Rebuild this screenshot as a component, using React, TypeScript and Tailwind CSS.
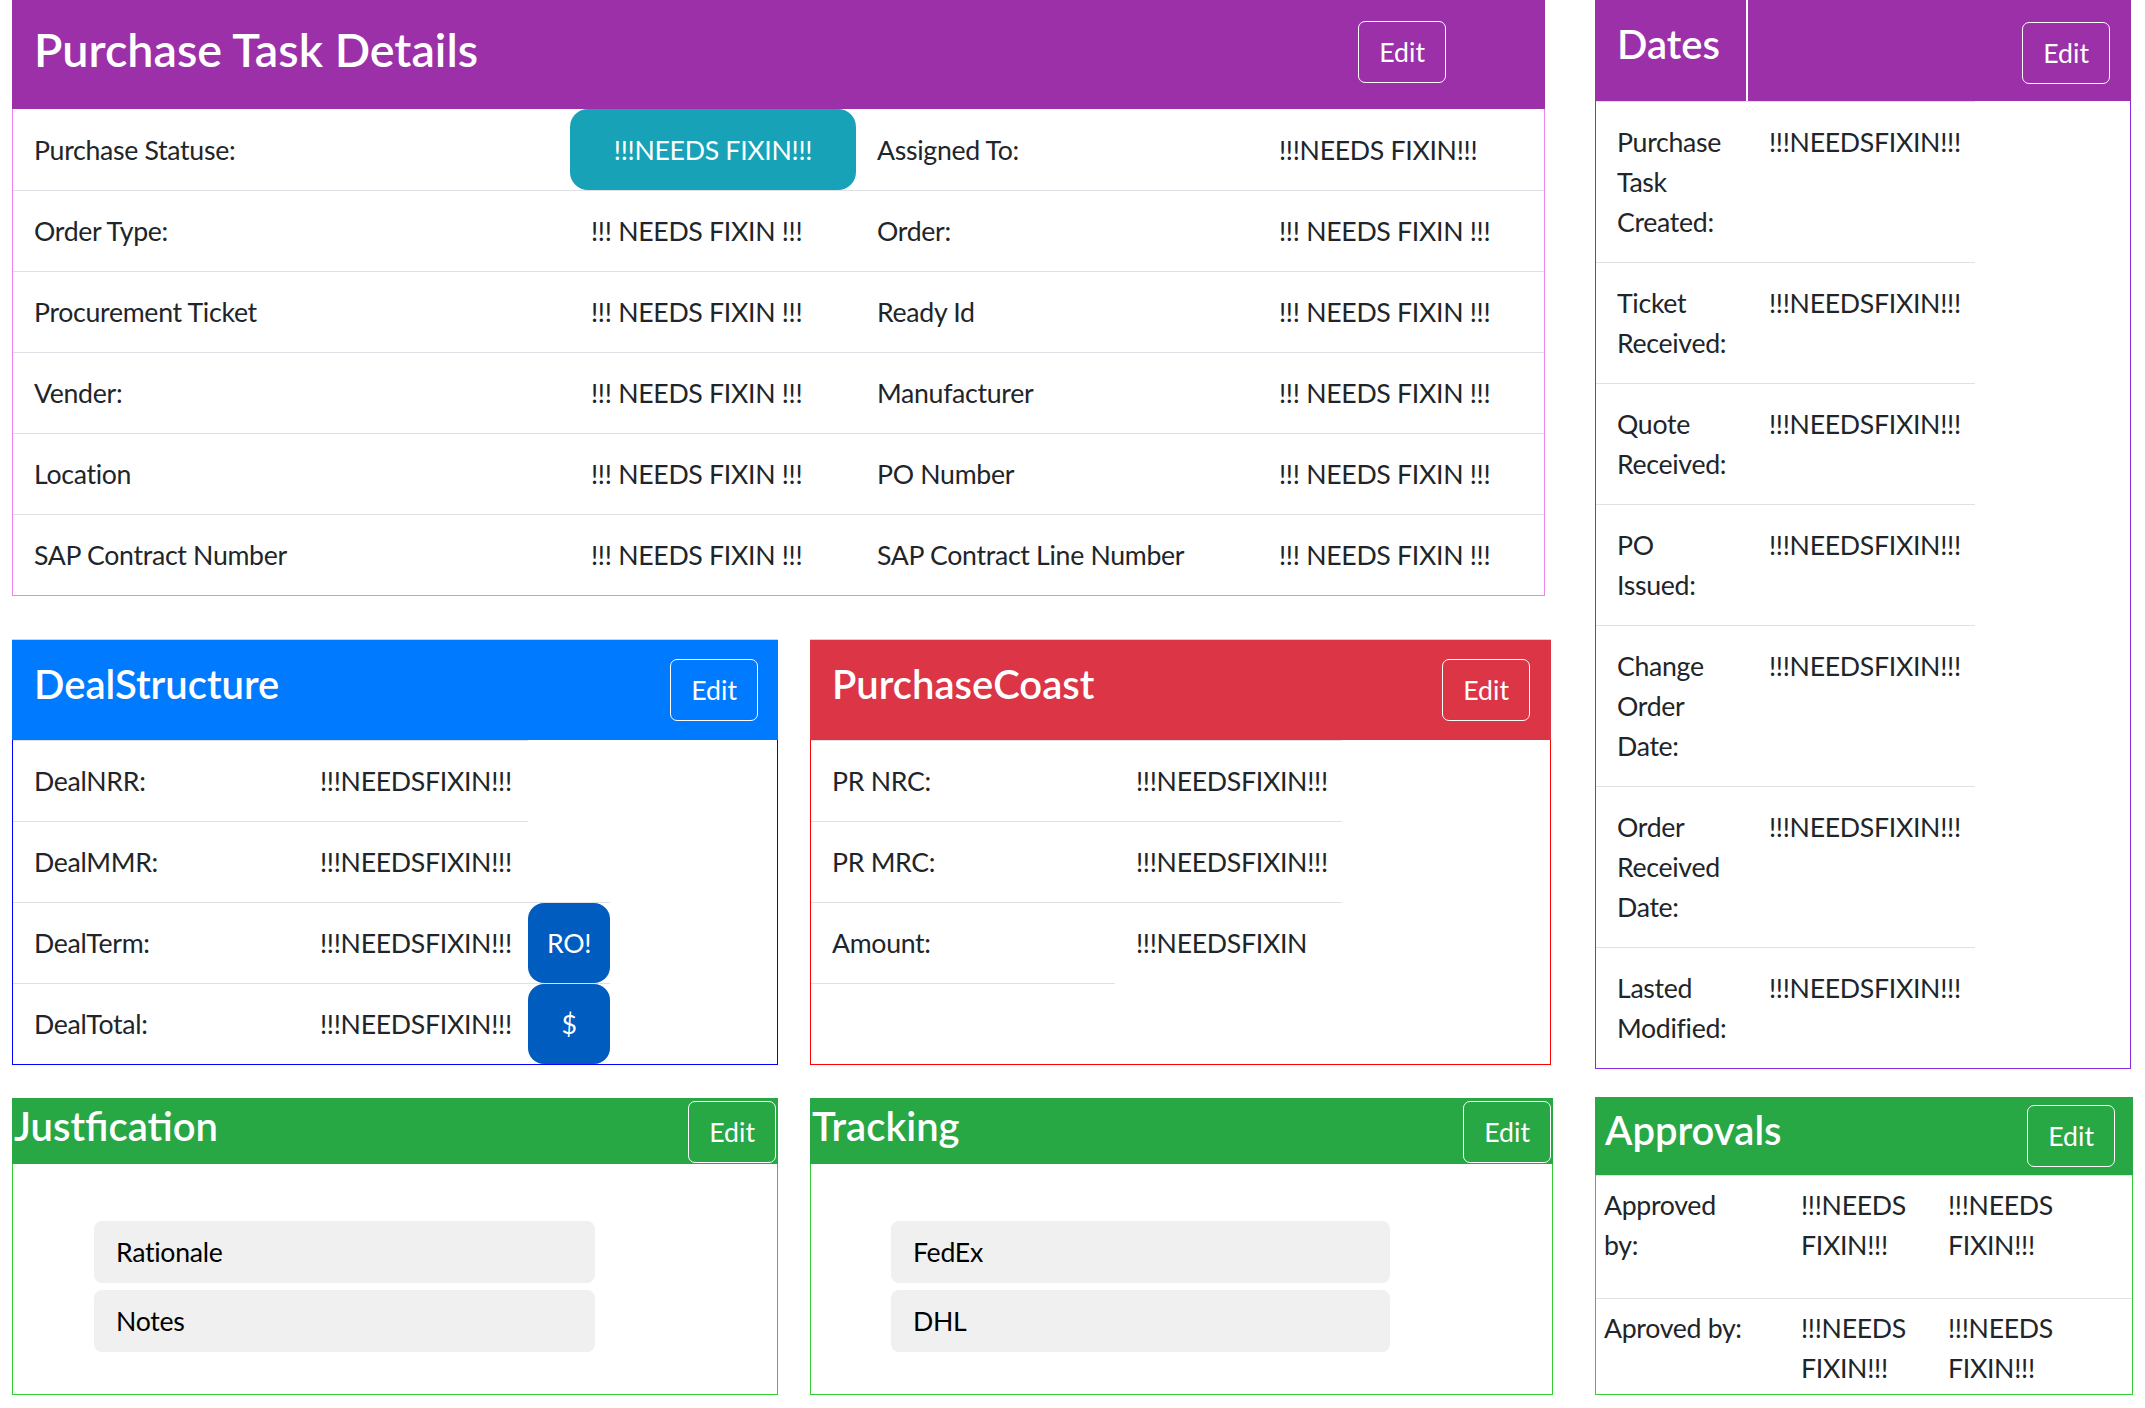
import React from "react"

// Purchase task dashboard: task details, dates, deal structure, cost, justification, tracking, approvals

const FIX = "!!! NEEDS FIXIN !!!"
const FIX_TIGHT = "!!!NEEDSFIXIN!!!"

const taskRows = [
  { label: "Purchase Statuse:", value: "!!!NEEDS FIXIN!!!", label2: "Assigned To:", value2: "!!!NEEDS FIXIN!!!", status: true },
  { label: "Order Type:", value: FIX, label2: "Order:", value2: FIX },
  { label: "Procurement Ticket", value: FIX, label2: "Ready Id", value2: FIX },
  { label: "Vender:", value: FIX, label2: "Manufacturer", value2: FIX },
  { label: "Location", value: FIX, label2: "PO Number", value2: FIX },
  { label: "SAP Contract Number", value: FIX, label2: "SAP Contract Line Number", value2: FIX },
]

const dateRows = [
  "Purchase Task Created:",
  "Ticket Received:",
  "Quote Received:",
  "PO Issued:",
  "Change Order Date:",
  "Order Received Date:",
  "Lasted Modified:",
]

const EditButton = () => (
  <button className="shrink-0 rounded-[7px] border border-white px-[20px] py-[10px] text-[26.67px] leading-[40px] tracking-normal text-white">
    Edit
  </button>
)

const PurchaseTaskDetails = () => (
  <div className="w-[1533px]">
    <div className="flex h-[109px] items-start justify-between bg-[#9c30a9] pl-[22px] pr-[99px] pt-[20px]">
      <h3 className="pt-[1px] text-[46.67px] font-semibold leading-[56px] tracking-normal text-white">Purchase Task Details</h3>
      <div className="pt-[1px]">
        <EditButton />
      </div>
    </div>
    <div className="border-x border-b border-[#ee82ee]">
      {taskRows.map((row, i) => (
        <div key={i} className={`flex h-[81px] items-center ${i > 0 ? "border-t border-[#dee2e6]" : ""}`}>
          <div className="w-[557px] shrink-0 px-[21px]">{row.label}</div>
          {row.status ? (
            <div className="flex w-[286px] shrink-0 self-stretch items-center justify-center rounded-[18px] bg-[#17a2b8] text-white">
              {row.value}
            </div>
          ) : (
            <div className="w-[286px] shrink-0 px-[21px]">{row.value}</div>
          )}
          <div className="w-[402px] shrink-0 px-[21px]">{row.label2}</div>
          <div className="flex-1 px-[21px]">{row.value2}</div>
        </div>
      ))}
    </div>
  </div>
)

const Dates = () => (
  <div className="w-[536px]">
    <div className="flex h-[101px] bg-[#9c30a9]">
      <div className="w-[153px] shrink-0 border-r-2 border-white pl-[22px] pt-[20px]">
        <h4 className="text-[40px] font-semibold leading-[48px] tracking-normal text-white">Dates</h4>
      </div>
      <div className="flex flex-1 items-start justify-end pr-[21px] pt-[22px]">
        <EditButton />
      </div>
    </div>
    <div className="border-x border-b border-[#8a2be2]">
      {dateRows.map((label) => (
        <div key={label} className="flex w-[379px] border-t border-[#dee2e6] py-[20px]">
          <div className="w-[152px] shrink-0 px-[21px]">{label}</div>
          <div className="px-[21px]">{FIX_TIGHT}</div>
        </div>
      ))}
    </div>
  </div>
)

const DealStructure = () => {
  const rows = [
    { label: "DealNRR:" },
    { label: "DealMMR:" },
    { label: "DealTerm:", button: "RO!" },
    { label: "DealTotal:", button: "$" },
  ]
  return (
    <div className="w-[766px] border-t border-[#cfd4da]">
      <div className="flex h-[100px] items-start justify-between bg-[#007bff] pl-[22px] pr-[20px] pt-[19px]">
        <h4 className="pt-[1px] text-[40px] font-semibold leading-[48px] tracking-normal text-white">DealStructure</h4>
        <EditButton />
      </div>
      <div className="border-x border-b border-[#0000ff]">
        {rows.map((row) => (
          <div key={row.label} className="flex h-[81px]">
            <div className="flex w-[286px] shrink-0 items-center border-t border-[#dee2e6] px-[21px]">{row.label}</div>
            <div className="flex w-[229px] shrink-0 items-center border-t border-[#dee2e6] px-[21px]">{FIX_TIGHT}</div>
            {row.button && (
              <div className="w-[82px] shrink-0 border-t border-[#dee2e6]">
                <div className="flex h-full items-center justify-center rounded-[16px] bg-[#005cbf] text-white">
                  {row.button}
                </div>
              </div>
            )}
          </div>
        ))}
      </div>
    </div>
  )
}

const PurchaseCoast = () => {
  const rows = [
    { label: "PR NRC:", value: FIX_TIGHT },
    { label: "PR MRC:", value: FIX_TIGHT },
    { label: "Amount:", value: "!!!NEEDSFIXIN" },
  ]
  return (
    <div className="w-[741px] border-t border-[#cfd4da]">
      <div className="flex h-[100px] items-start justify-between bg-[#dc3545] pl-[22px] pr-[21px] pt-[19px]">
        <h4 className="pt-[1px] text-[40px] font-semibold leading-[48px] tracking-normal text-white">PurchaseCoast</h4>
        <EditButton />
      </div>
      <div className="border-x border-b border-[#ff0000]">
        {rows.map((row) => (
          <div key={row.label} className="flex h-[81px]">
            <div className="flex w-[304px] shrink-0 items-center border-t border-[#dee2e6] px-[21px]">{row.label}</div>
            <div className="flex w-[227px] shrink-0 items-center border-t border-[#dee2e6] px-[21px]">{row.value}</div>
          </div>
        ))}
        <div className="flex h-[81px]">
          <div className="w-[304px] border-t border-[#dee2e6]" />
        </div>
      </div>
    </div>
  )
}

const ListCard = ({ title, items, width, inset, box }: { title: string; items: string[]; width: string; inset: string; box: string }) => (
  <div className={`${width} flex h-[297px] flex-col`}>
    <div className="flex h-[66px] items-start justify-between bg-[#28a745] pl-[2px] pr-[2px] pt-[3px]">
      <h4 className="pt-[1px] text-[40px] font-semibold leading-[48px] tracking-normal text-white">{title}</h4>
      <EditButton />
    </div>
    <div className={`flex flex-1 flex-col gap-[7px] border-x border-b border-[#32cd32] pt-[57px] ${inset}`}>
      {items.map((item) => (
        <div key={item} className={`flex h-[62px] items-center rounded-[8px] bg-[#f0f0f0] px-[22px] text-black ${box}`}>
          {item}
        </div>
      ))}
    </div>
  </div>
)

const Approvals = () => {
  const rows = [
    { label: "Approved by:", h: "h-[123px]" },
    { label: "Aproved by:", h: "flex-1" },
  ]
  return (
    <div className="flex h-[298px] w-[538px] flex-col overflow-hidden">
      <div className="flex h-[78px] shrink-0 items-start justify-between bg-[#28a745] pl-[10px] pr-[18px] pt-[8px]">
        <h4 className="pt-[1px] text-[40px] font-semibold leading-[48px] tracking-normal text-white">Approvals</h4>
        <EditButton />
      </div>
      <div className="flex flex-1 flex-col border-x border-b border-[#32cd32]">
        {rows.map((row) => (
          <div key={row.label} className={`flex border-t border-[#dee2e6] pt-[9px] ${row.h}`}>
            <div className="w-[197px] shrink-0 pl-[8px]">
              <div className="max-w-[150px]">{row.label}</div>
            </div>
            <div className="w-[147px] shrink-0 px-[8px]">!!!NEEDS FIXIN!!!</div>
            <div className="px-[8px]">!!!NEEDS FIXIN!!!</div>
          </div>
        ))}
      </div>
    </div>
  )
}

export default function App() {
  return (
    <div className="min-h-screen bg-white font-['Lato',sans-serif] text-[26.67px] leading-[40px] tracking-[-0.3px] text-[#212529]">
      <div className="flex gap-[42px] pl-[12px]">
        <div className="flex w-[1541px] flex-col">
          <PurchaseTaskDetails />
          <div className="mt-[43px] flex gap-[32px]">
            <DealStructure />
            <PurchaseCoast />
          </div>
          <div className="mt-[33px] flex gap-[32px]">
            <ListCard title="Justfication" items={["Rationale", "Notes"]} width="w-[766px]" inset="pl-[81px]" box="w-[501px]" />
            <ListCard title="Tracking" items={["FedEx", "DHL"]} width="w-[743px]" inset="pl-[80px]" box="w-[499px]" />
          </div>
        </div>
        <div className="flex w-[538px] flex-col">
          <Dates />
          <div className="mt-[28px]">
            <Approvals />
          </div>
        </div>
      </div>
    </div>
  )
}
